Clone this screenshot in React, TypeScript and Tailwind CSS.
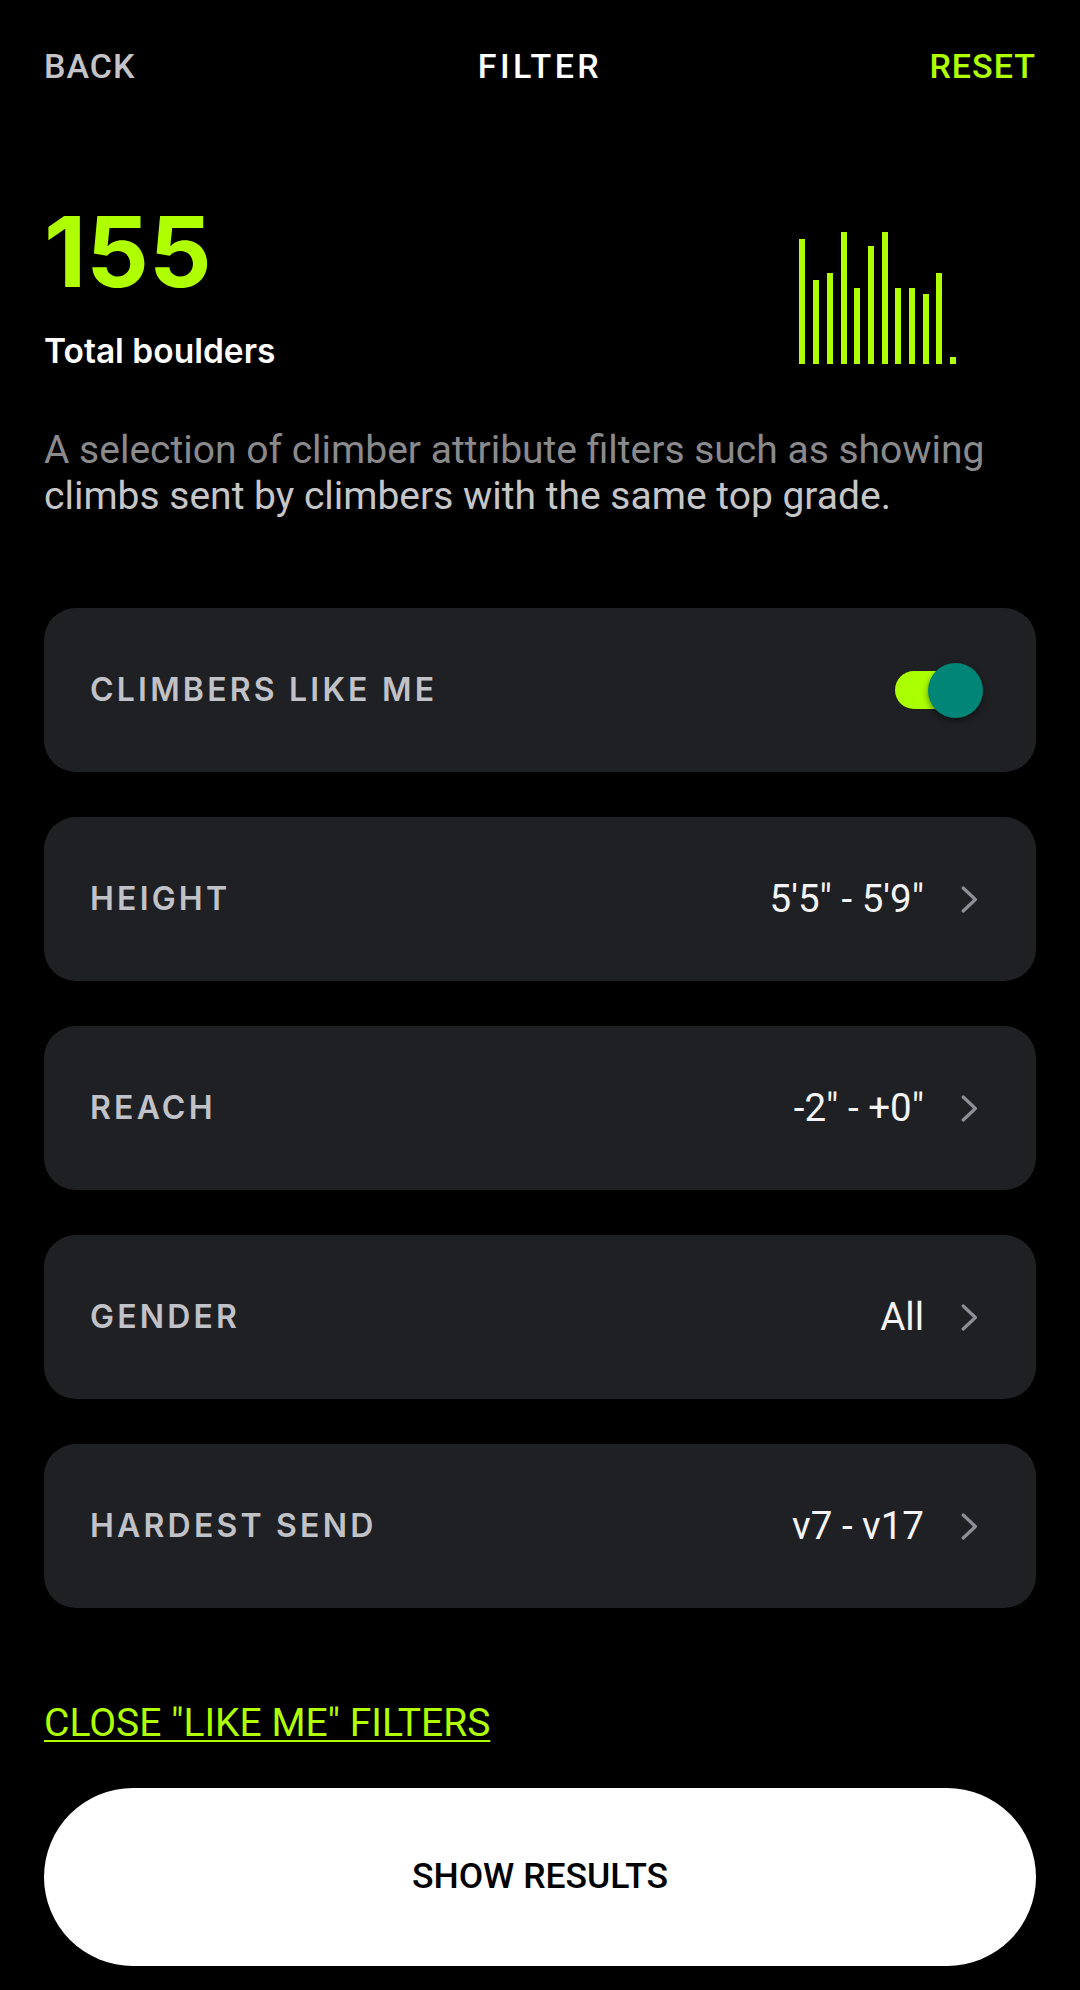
import React from "react";

const bars = [125, 84, 91, 132, 76, 118, 132, 76, 76, 70, 91, 7];

const rows = [
  { label: "HEIGHT", value: `5'5" - 5'9"` },
  { label: "REACH", value: `-2" - +0"` },
  { label: "GENDER", value: "All" },
  { label: "HARDEST SEND", value: "v7 - v17" },
];

const Chevron = () => (
  <svg width="17" height="27" viewBox="0 0 17 27" fill="none" className="shrink-0">
    <path
      d="M2.2 2 L14.4 13.5 L2.2 25"
      stroke="#8e8f96"
      strokeWidth="3.2"
      strokeLinecap="round"
      strokeLinejoin="round"
    />
  </svg>
);

const App = () => {
  return (
    <div className="w-[1080px] min-h-[1990px] bg-black px-[44px] font-['Roboto',sans-serif]">
      {/* top bar */}
      <header className="grid grid-cols-3 pt-[46px] text-[34px] leading-[40px] font-medium">
        <span className="text-[#c4c4c8] tracking-[0.03em]">BACK</span>
        <span className="text-center text-white tracking-[0.1em]">FILTER</span>
        <span className="text-right text-[#b0ff00] tracking-[0.03em]">RESET</span>
      </header>

      {/* totals + mini chart */}
      <section className="mt-[117px] flex justify-between">
        <div className="flex flex-col font-['Inter',sans-serif]">
          <span className="text-[98px] leading-none font-bold text-[#b0ff00]">155</span>
          <span className="mt-[30px] text-[33.5px] leading-[40px] font-semibold text-white">
            Total boulders
          </span>
        </div>
        <div className="self-end mb-[7px] mr-[80px] flex items-end gap-[7.7px]">
          {bars.map((h, i) => (
            <div key={i} className="w-[6px] bg-[#b0ff00]" style={{ height: h }} />
          ))}
        </div>
      </section>

      <p className="mt-[56px] text-[39px] leading-[46px]">
        <span className="text-[#8a8a8c]">A selection of climber attribute filters such as showing </span>
        <span className="text-[#c6c6c8]">climbs sent by climbers with the same top grade.</span>
      </p>

      {/* filter cards */}
      <div className="mt-[89px] flex flex-col gap-[45px]">
        <div className="h-[164px] rounded-[32px] bg-[#1f2024] flex items-center justify-between pl-[46px] pr-[53px]">
          <span className="font-['Inter',sans-serif] font-semibold text-[32px] leading-none tracking-[0.1em] text-[#c1c2c7]">
            CLIMBERS LIKE ME
          </span>
          <div className="relative w-[88px] h-[55px] flex items-center">
            <div className="h-[38px] w-[80px] rounded-full bg-[#aaff00]" />
            <div className="absolute right-0 top-0 w-[55px] h-[55px] rounded-full bg-[#008577] shadow-[0_3px_6px_rgba(0,0,0,0.45)]" />
          </div>
        </div>
        {rows.map((r) => (
          <div
            key={r.label}
            className="h-[164px] rounded-[32px] bg-[#1f2024] flex items-center pl-[46px] pr-[58px]"
          >
            <span className="font-['Inter',sans-serif] font-semibold text-[32px] leading-none tracking-[0.1em] text-[#c1c2c7]">
              {r.label}
            </span>
            <span className="ml-auto mr-[37px] text-[38.5px] leading-none text-[#f4f4f6]">{r.value}</span>
            <Chevron />
          </div>
        ))}
      </div>

      <a
        href="#close"
        className="mt-[93px] inline-block text-[39px] leading-[45px] text-[#b0ff00] underline decoration-2 underline-offset-[4px]"
      >
        CLOSE "LIKE ME" FILTERS
      </a>

      <button className="mt-[42px] mb-[23px] h-[178px] w-full rounded-full bg-white flex items-center justify-center text-[35.5px] font-medium text-black">
        SHOW RESULTS
      </button>
    </div>
  );
};

export default App;
